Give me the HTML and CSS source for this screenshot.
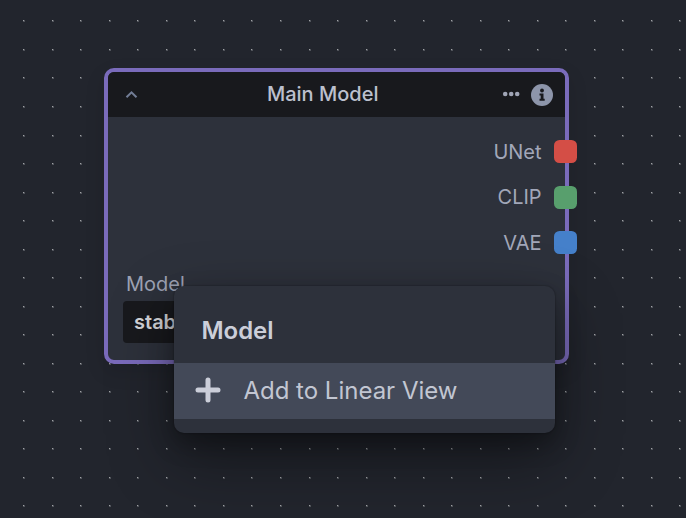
FILE: index.html
```
<!DOCTYPE html>
<html lang="en">
<head>
<meta charset="utf-8">
<title>Node Editor</title>
<link rel="stylesheet" href="styles.css">
</head>
<body>
<main class="canvas">
  <svg class="grid" id="grid" width="686" height="518" aria-hidden="true"></svg>
  <section class="node">
    <header class="node-header">
      <svg class="chevron" width="13" height="9" viewBox="0 0 13 9"><path d="M1.5 7.3 6.5 2.3l5 5"/></svg>
      <h1 class="node-title">Main Model</h1>
      <div class="node-actions">
        <svg class="dots" width="18" height="6" viewBox="0 0 18 6"><circle cx="3.2" cy="3" r="2.3"/><circle cx="9.2" cy="3" r="2.3"/><circle cx="15.2" cy="3" r="2.3"/></svg>
        <svg class="info" width="22" height="22" viewBox="0 0 22 22"><circle class="disc" cx="11" cy="11" r="11"/><circle cx="11" cy="6.5" r="1.9"/><path d="M8.5 9.6h4v5.1h1.2v2H8.5v-2h1.2v-3.1H8.5z"/></svg>
      </div>
    </header>
    <div class="outputs">
      <div class="output"><span>UNet</span><i class="handle red"></i></div>
      <div class="output"><span>CLIP</span><i class="handle green"></i></div>
      <div class="output"><span>VAE</span><i class="handle blue"></i></div>
    </div>
    <div class="field">
      <div class="field-label">Model</div>
      <div class="field-select">stab</div>
    </div>
  </section>
  <div class="menu">
    <div class="menu-title">Model</div>
    <div class="menu-item">
      <svg class="plus" width="26" height="26" viewBox="0 0 26 26"><path d="M13 3v20M3 13h20"/></svg>
      <span>Add to Linear View</span>
    </div>
  </div>
</main>
<script src="grid.js"></script>
</body>
</html>
```
FILE: grid.js
```
const grid = document.getElementById("grid");
const step = 28.53;
let bright = "";
let dim = "";
for (let row = 0; row < 18; row++) {
  for (let col = 0; col < 24; col++) {
    const x = Math.round(23.2 + col * step);
    const y = Math.round(20.4 + row * step);
    dim += `M${x} ${y}h2v2h-2z`;
    bright += `M${x} ${y}h1v1h-1z`;
  }
}
grid.innerHTML = `<path class="dot-dim" d="${dim}"/><path class="dot-bright" d="${bright}"/>`;
```
FILE: styles.css
```
* { box-sizing: border-box; }
body {
  margin: 0;
  overflow: hidden;
  font-family: Inter, sans-serif;
  background: #22252d;
}
.canvas { position: relative; width: 686px; height: 518px; overflow: hidden; }
.grid { position: absolute; inset: 0; }
.dot-dim { fill: #50535a; }
.dot-bright { fill: #a0a2a5; }
.node {
  position: absolute;
  left: 104.4px;
  top: 68px;
  width: 464.6px;
  height: 296px;
  border: 4px solid #7a6bbb;
  border-radius: 10px;
  background: #2d313b;
  box-shadow: 0 8px 20px rgba(0, 0, 0, .12);
}
.node-header {
  display: flex;
  align-items: center;
  justify-content: space-between;
  height: 45px;
  padding: 0 11.6px 0 16.6px;
  border-radius: 6px 6px 0 0;
  background: #18191d;
}
.chevron { fill: none; stroke: #727d96; stroke-width: 2; }
.node-title {
  margin: 0 0 1px 5px;
  font-size: 20px;
  font-weight: 500;
  line-height: 24px;
  color: #bcc0ce;
}
.node-actions { display: flex; align-items: center; gap: 11px; }
.dots { margin-bottom: 1px; fill: #a0a5b6; }
.info { fill: #18191d; }
.info .disc { fill: #8d95aa; }
.outputs { display: flex; flex-direction: column; padding-top: 12px; }
.output {
  display: flex;
  align-items: center;
  justify-content: flex-end;
  gap: 12px;
  height: 45.5px;
  margin-right: -11.6px;
  font-size: 20px;
  color: #a2a7b9;
}
.handle { width: 23px; height: 23px; border-radius: 5.5px; }
.red { background: #d44e46; }
.green { background: #589f6d; }
.blue { background: #4580ca; }
.field { padding: 5px 14px 0 14.6px; }
.field-label {
  padding-left: 3px;
  font-size: 20px;
  line-height: 26px;
  color: #9da2b4;
}
.field-select {
  height: 42px;
  margin-top: 4.5px;
  padding-left: 11px;
  border-radius: 4px;
  background: #18191d;
  color: #d4d5d9;
  font-size: 20px;
  font-weight: 600;
  line-height: 42px;
}
.menu {
  position: absolute;
  left: 174.4px;
  top: 286px;
  width: 381px;
  height: 147px;
  padding-top: 27px;
  border-radius: 10px;
  background: #2d313b;
  box-shadow: 0 0 1px 1px rgba(0, 0, 0, .12), 0 10px 25px rgba(0, 0, 0, .3), 0 25px 65px rgba(0, 0, 0, .4);
}
.menu-title {
  height: 50px;
  padding-left: 27px;
  color: #cbced9;
  font-size: 24px;
  font-weight: 600;
  line-height: 36px;
}
.menu-item {
  display: flex;
  align-items: center;
  gap: 22px;
  height: 56px;
  padding: 0 0 2px 21px;
  background: #434958;
  color: #c2c6d2;
  font-size: 24px;
}
.plus { fill: none; stroke: #cbced9; stroke-width: 5; stroke-linecap: round; }
```
